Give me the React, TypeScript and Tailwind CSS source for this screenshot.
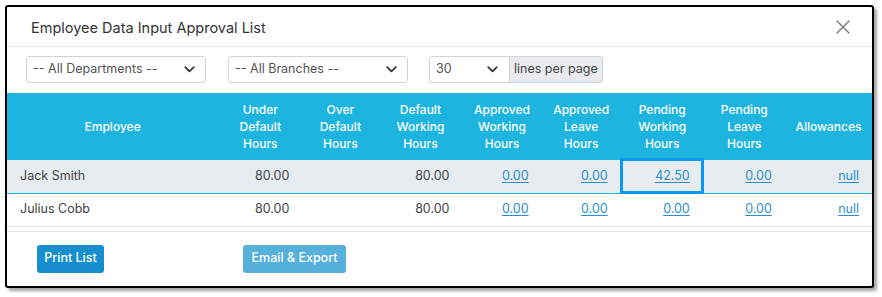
import React from "react";

const Chevron = () => (
  <svg width="11" height="7" viewBox="0 0 11 7" className="shrink-0">
    <path d="M1.2 1.2 L5.5 5.3 L9.8 1.2" fill="none" stroke="#333" strokeWidth="1.7" strokeLinecap="round" strokeLinejoin="round" />
  </svg>
);

const Select = ({ label, w }: { label: string; w: string }) => (
  <div className={`flex h-[27px] items-center justify-between rounded-[3px] border border-[#cfd4d9] bg-white pl-[6px] pr-[10px] text-[12.5px] text-[#555] ${w}`}>
    <span>{label}</span>
    <Chevron />
  </div>
);

const headers = [
  ["Employee"],
  ["Under", "Default", "Hours"],
  ["Over", "Default", "Hours"],
  ["Default", "Working", "Hours"],
  ["Approved", "Working", "Hours"],
  ["Approved", "Leave", "Hours"],
  ["Pending", "Working", "Hours"],
  ["Pending", "Leave", "Hours"],
  ["Allowances"],
];

const widths = [211, 84, 76, 84, 79, 79, 83, 81, 87];

type Row = { name: string; under: string; over: string; def: string; aw: string; al: string; pw: string; pl: string; allow: string };

const rows: Row[] = [
  { name: "Jack Smith", under: "80.00", over: "", def: "80.00", aw: "0.00", al: "0.00", pw: "42.50", pl: "0.00", allow: "null" },
  { name: "Julius Cobb", under: "80.00", over: "", def: "80.00", aw: "0.00", al: "0.00", pw: "0.00", pl: "0.00", allow: "null" },
];

const Link = ({ v }: { v: string }) => (
  <a className="cursor-pointer text-[#2a8fd0] underline underline-offset-[2px]">{v}</a>
);

export default function App() {
  return (
    <div className="min-h-[297px] w-[882px] bg-white pl-[5px] pt-[5px]" style={{ fontFamily: "Inter, 'Noto Sans', sans-serif" }}>
      <div className="h-[283px] w-[869px] overflow-hidden rounded-[3px] border-2 border-black bg-white shadow-[3px_3px_3px_rgba(0,0,0,0.35)]">
        {/* header */}
        <div className="flex h-[40px] items-center justify-between border-b border-[#e5e7ea] pl-[24px] pr-[22px] pt-[3px]">
          <div className="text-[14.5px] text-[#333]">Employee Data Input Approval List</div>
          <svg width="14" height="14" viewBox="0 0 14 14" className="mb-[2px]">
            <path d="M1 1 L13 13 M13 1 L1 13" stroke="#777" strokeWidth="1.4" strokeLinecap="round" />
          </svg>
        </div>
        {/* filters */}
        <div className="flex h-[46px] items-start pl-[19px] pt-[9px]">
          <Select label="-- All Departments --" w="w-[180px]" />
          <div className="w-[22px]" />
          <Select label="-- All Branches --" w="w-[180px]" />
          <div className="w-[21px]" />
          <div className="flex">
            <div className="flex h-[27px] w-[81px] items-center justify-between rounded-l-[3px] border border-[#cfd4d9] bg-white pl-[6px] pr-[11px] text-[12.5px] text-[#555]">
              <span>30</span>
              <Chevron />
            </div>
            <div className="-ml-px flex h-[27px] w-[94px] items-center rounded-r-[3px] border border-[#cfd4d9] bg-[#e9ecef] pl-[4px] text-[12.5px] text-[#444]">
              lines per page
            </div>
          </div>
        </div>
        {/* table */}
        <table className="w-[865px] table-fixed border-collapse">
          <colgroup>
            {widths.map((w, i) => (
              <col key={i} style={{ width: w }} />
            ))}
          </colgroup>
          <thead>
            <tr className="h-[67px] bg-[#1eb4e0]">
              {headers.map((h, i) => (
                <th key={i} className="px-1 text-center align-middle text-[12px] font-medium leading-[17px] text-white">
                  {h.map((l, j) => (
                    <div key={j}>{l}</div>
                  ))}
                </th>
              ))}
            </tr>
          </thead>
          <tbody className="text-[12.5px] text-[#444]">
            {rows.map((r, i) => (
              <tr key={i} className={`h-[33px] ${i === 0 ? "border-b border-[#1eb4e0] bg-[#e6ecf0]" : "border-b border-[#e3e6e9] bg-white"}`}>
                <td className="pl-[13px] text-left">{r.name}</td>
                <td className="pr-[13px] text-right">{r.under}</td>
                <td className="pr-[13px] text-right">{r.over}</td>
                <td className="pr-[13px] text-right">{r.def}</td>
                <td className="pr-[13px] text-right"><Link v={r.aw} /></td>
                <td className="pr-[13px] text-right"><Link v={r.al} /></td>
                <td className="relative pr-[14px] text-right">
                  {i === 0 && (
                    <span className="pointer-events-none absolute left-[-1px] right-0 top-[-2px] bottom-[-1px] border-[3px] border-[#0b98f2]" />
                  )}
                  <Link v={r.pw} />
                </td>
                <td className="pr-[13px] text-right"><Link v={r.pl} /></td>
                <td className="pr-[13px] text-right"><Link v={r.allow} /></td>
              </tr>
            ))}
          </tbody>
        </table>
        {/* footer */}
        <div className="mt-[4px] flex h-[54px] items-center border-t border-[#e3e6e9] pl-[30px] pt-[1px]">
          <button className="h-[28px] w-[67px] rounded-[3px] bg-[#178fcf] text-[12.5px] font-medium text-white">Print List</button>
          <div className="w-[139px]" />
          <button className="h-[28px] w-[103px] rounded-[3px] bg-[#55b0dc] text-[12.5px] font-medium text-white">Email &amp; Export</button>
        </div>
      </div>
    </div>
  );
}
